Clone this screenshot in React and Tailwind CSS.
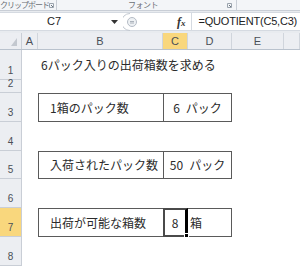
const rows = [
  { n: "1", h: "h-[30px]" },
  { n: "2", h: "h-[13px]" },
  { n: "3", h: "h-[29px]" },
  { n: "4", h: "h-[29px]" },
  { n: "5", h: "h-[28px]" },
  { n: "6", h: "h-[29px]" },
  { n: "7", h: "h-[29px]", active: true },
  { n: "8", h: "h-[29px]" },
];

const cols = [
  { l: "A", w: "w-[16px]" },
  { l: "B", w: "w-[125px]" },
  { l: "C", w: "w-[25px]", active: true },
  { l: "D", w: "w-[44px]" },
  { l: "E", w: "w-[52px]" },
  { l: "", w: "w-[16px]" },
];

const Launcher = () => (
  <svg width="5" height="5" viewBox="0 0 5 5" className="shrink-0">
    <path d="M0.5 0.5h4v4h-4z" fill="none" stroke="#9aa3ad" strokeWidth="1" />
    <path d="M2 2l2 2" stroke="#6b7580" strokeWidth="1" />
  </svg>
);

const BoxRow = ({ label, value, unit, selected }) => (
  <div className="flex h-full">
    <div className="w-[16px]" />
    <div className="w-[125px] border border-r-0 border-[#5a5a5a] flex items-center pl-[11px] text-[12px]">
      {label}
    </div>
    {selected ? (
      <>
        <div className="w-[25px] relative border-2 border-[#4a4a4a] border-r-[3px] border-r-black flex items-center justify-center text-[12px]">
          {value}
          <div className="absolute -right-[4px] -bottom-[3px] w-[5px] h-[5px] bg-black border border-white" />
        </div>
        <div className="w-[44px] border border-l-0 border-[#5a5a5a] flex items-center pl-[2px] text-[12px]">
          {unit}
        </div>
      </>
    ) : (
      <div className="w-[69px] border border-[#5a5a5a] flex items-center justify-center gap-[6px] text-[12px]">
        <span>{value}</span>
        <span>{unit}</span>
      </div>
    )}
  </div>
);

const cellContent = (n) => {
  if (n === "1")
    return (
      <div className="flex h-full items-center pl-[19px] text-[12px] whitespace-nowrap">
        6パック入りの出荷箱数を求める
      </div>
    );
  if (n === "3") return <BoxRow label="1箱のパック数" value="6" unit="パック" />;
  if (n === "5") return <BoxRow label="入荷されたパック数" value="50" unit="パック" />;
  if (n === "7") return <BoxRow label="出荷が可能な箱数" value="8" unit="箱" selected />;
  return null;
};

export default function App() {
  return (
    <div className="w-[300px] h-[266px] overflow-hidden bg-[#e8ebef] font-['Noto_Sans_CJK_JP',sans-serif] text-[#2b2b2b]">
      {/* ribbon group labels */}
      <div className="h-[11px] flex items-center bg-[#f3f5f8] border-b border-[#c9ced6] text-[8px] leading-none text-[#6b6f75]">
        <div className="w-[57px] h-full flex items-center border-r border-[#c9ced6]">
          <span className="whitespace-nowrap tracking-[-1px]">クリップボード</span>
          <span className="ml-auto mr-[4px]"><Launcher /></span>
        </div>
        <div className="w-[180px] h-full flex items-center border-r border-[#c9ced6]">
          <span className="ml-[71px] whitespace-nowrap tracking-[-0.5px]">フォント</span>
          <span className="ml-auto mr-[4px]"><Launcher /></span>
        </div>
      </div>

      {/* formula bar */}
      <div className="mt-[1px] h-[19px] flex items-center bg-white border-y border-[#d5dae1]">
        <div className="w-[108px] h-full flex items-center justify-center text-[11px] font-['Liberation_Sans',sans-serif] text-[#222]">
          C7
        </div>
        <svg width="7" height="4" viewBox="0 0 7 4" className="ml-[3px]">
          <path d="M0 0h7L3.5 4z" fill="#333" />
        </svg>
        <svg width="16" height="18" viewBox="0 0 16 18" className="ml-[5px]">
          <path d="M7 0.5A8.5 8.5 0 0 0 7 17.5" fill="none" stroke="#c2c8d0" />
          <circle cx="9" cy="9" r="4.5" fill="#eef1f4" stroke="#b5bcc6" />
          <path d="M7 8.5h4M7 10h4" stroke="#9aa3ad" strokeWidth="0.8" />
        </svg>
        <div className="w-[38px]" />
        <span className="font-['Liberation_Serif',serif] italic text-[12px] font-bold text-[#333] leading-none">
          f<span className="text-[9px]">x</span>
        </span>
        <div className="ml-[5px] h-full border-l border-[#d5dae1]" />
        <div className="pl-[7px] text-[11px] font-['Liberation_Sans',sans-serif] text-[#222] whitespace-nowrap tracking-[-0.2px]">
          =QUOTIENT(C5,C3)
        </div>
      </div>

      {/* column headers */}
      <div className="mt-[2px] flex h-[17px] bg-[#eceef2] border-b border-[#b9c2cd] text-[11px] font-['Liberation_Sans',sans-serif] text-[#4a4f57]">
        <div className="w-[22px] h-full border-r border-[#c9ced6] flex items-end justify-end pr-[4px] pb-[3px]">
          <svg width="6" height="8" viewBox="0 0 6 8">
            <path d="M6 0v8H0z" fill="#c3c8cf" />
          </svg>
        </div>
        {cols.map((c) => (
          <div
            key={c.l + c.w}
            className={`${c.w} h-full border-r border-[#d0d5dc] flex items-center justify-center ${
              c.active ? "bg-[#f9d77d]" : ""
            }`}
          >
            {c.l}
          </div>
        ))}
      </div>

      {/* rows */}
      {rows.map((r) => (
        <div key={r.n} className={`flex ${r.h} bg-white`}>
          <div
            className={`w-[22px] shrink-0 border-r border-b border-[#c9ced6] flex items-end justify-center pb-[3px] text-[10px] leading-none font-['Liberation_Sans',sans-serif] text-[#4a4f57] ${
              r.active ? "bg-[#f9d77d]" : "bg-[#eceef2]"
            }`}
          >
            {r.n}
          </div>
          <div className="flex-1">{cellContent(r.n)}</div>
        </div>
      ))}
    </div>
  );
}
